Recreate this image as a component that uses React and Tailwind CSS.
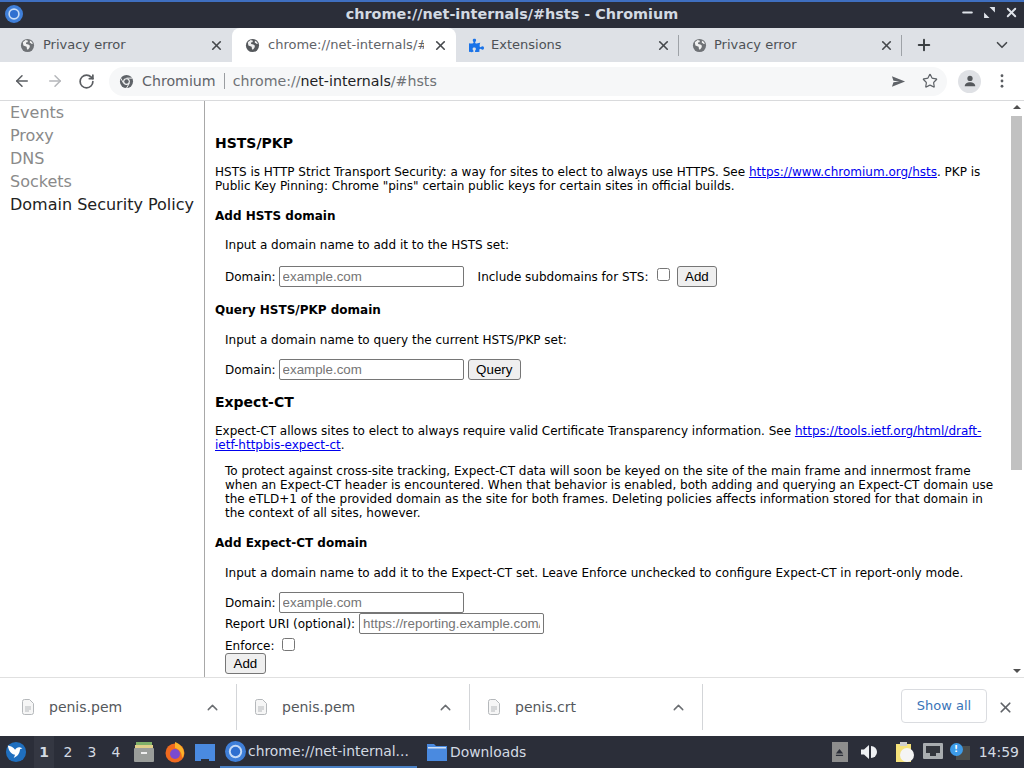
import React from "react";
import { ArrowLeft, ArrowRight, RotateCw, Star, X, Plus, ChevronDown, ChevronUp, Minus } from "lucide-react";
import { FaPuzzlePiece } from "react-icons/fa";

const Globe = ({ className }) => (
  <svg viewBox="0 0 16 16" className={className}>
    <circle cx="8" cy="8" r="7" fill="currentColor" />
    <path d="M3 4.500l3-2.300 2.500.6-.6 1.700-1.600.4.3 1.600 2.400.3 1.600 1.400-.5 2.200-1.700 2-1-.6-.3-2.400L3.600 8z" fill="#fff" opacity="0.9" />
    <path d="M10.500 2.700l2.300 1.600.9 2.200-1.700-.5-1.500-1.500z" fill="#fff" opacity="0.9" />
  </svg>
);

const ChromiumIcon = ({ size = 24 }) => (
  <svg viewBox="0 0 24 24" width={size} height={size} className="shrink-0">
    <circle cx="12" cy="12" r="12" fill="#3f7fd9" />
    <circle cx="12" cy="12" r="7.600" fill="#c7dbf6" />
    <circle cx="12" cy="12" r="5.400" fill="#2f6fd0" />
  </svg>
);

const Tab = ({ title, active, icon, divider, first }) => (
  <div className={`relative flex items-center h-[34px] shrink-0 pr-[8px] ${active ? "w-[224px] bg-white rounded-t-lg" : "w-[223px]"} ${first ? "pl-[10px]" : "pl-[12px]"}`}>
    <span className="w-[17px] flex justify-center shrink-0">{icon}</span>
    <span className={`w-[156px] overflow-hidden whitespace-nowrap text-[13px] ${first || active ? "ml-[7px]" : "ml-[6px]"} ${active ? "text-[#5f6368]" : "text-[#4d5156]"}`}>{title}</span>
    <X size={15} strokeWidth={2.6} className="ml-auto text-[#45484c] shrink-0" />
    {divider && <span className="absolute right-0 top-[7px] h-[21px] w-px bg-[#9ea2a7]" />}
  </div>
);

const Download = ({ name, width, inset }) => (
  <div className={`flex items-center h-[46px] border-r border-[#d3d5d8] pr-[15px] shrink-0 ${width} ${inset}`}>
    <svg viewBox="0 0 14 16" className="w-[14px] h-[16px] shrink-0 text-[#b5b8bb]" fill="none" stroke="currentColor" strokeWidth="1">
      <path d="M1.500 2.500a2 2 0 0 1 2-2h5l4 4v9a2 2 0 0 1-2 2h-7a2 2 0 0 1-2-2z" fill="#f6f6f6" />
      <path d="M4 8h6M4 10h6M4 12h4" />
    </svg>
    <span className="ml-[14px] text-[14px] text-[#55585c]">{name}</span>
    <ChevronUp size={17} strokeWidth={2} className="ml-auto text-[#6a6d71]" />
  </div>
);

const Field = ({ placeholder = "example.com", width = "w-[185px]" }) => (
  <input
    readOnly
    placeholder={placeholder}
    className={`${width} h-[21px] border border-[#767676] rounded-[2px] px-[3px] text-[13.33px] placeholder:text-[#757575] bg-white outline-none shrink-0`}
    style={{ fontFamily: "'Liberation Sans', sans-serif" }}
  />
);

const Btn = ({ children }) => (
  <button
    className="h-[21px] px-[7.5px] border border-[#767676] rounded-[3px] bg-[#efefef] text-[13.33px] text-black leading-none shrink-0"
    style={{ fontFamily: "'Liberation Sans', sans-serif" }}
  >
    {children}
  </button>
);

const Check = () => (
  <span className="inline-block w-[13px] h-[13px] border border-[#767676] rounded-[2.5px] bg-white shrink-0" />
);

const SectionTitle = ({ children, className }) => (
  <h3 className={`text-[12px] font-bold leading-[15px] text-black ${className}`}>{children}</h3>
);

const BigTitle = ({ children, className }) => (
  <h2 className={`text-[14px] font-bold leading-[17px] text-black ${className}`}>{children}</h2>
);

export default function App() {
  return (
    <div className="h-screen w-full flex flex-col overflow-hidden bg-white" style={{ fontFamily: "'DejaVu Sans', sans-serif" }}>
      {/* window title */}
      <div className="relative h-[28px] shrink-0 bg-[#2b2e39] border-t-2 border-[#3f6fc0] flex items-center justify-center">
        <span className="absolute left-[5px] top-[3px]"><ChromiumIcon size={18} /></span>
        <span className="text-[14.4px] font-bold text-[#d3dae3]">chrome://net-internals/#hsts - Chromium</span>
        <div className="absolute right-[5px] top-[3px] flex items-center gap-[8px] text-[#dfe3ea]">
          <Minus size={15} strokeWidth={3} />
          <svg viewBox="0 0 12 12" className="w-[13px] h-[13px]" fill="currentColor"><path d="M6 1h5v5zM6 11H1V6z" /></svg>
          <X size={15} strokeWidth={3} />
        </div>
      </div>

      {/* tab strip */}
      <div className="h-[34px] shrink-0 bg-[#dee1e6] flex items-center">
        <div className="w-[9px] shrink-0" />
        <Tab first title="Privacy error" icon={<Globe className="w-[15px] h-[15px] text-[#6f7276]" />} />
        <Tab title="chrome://net-internals/#hsts" active icon={<Globe className="w-[15px] h-[15px] text-[#55585c]" />} />
        <Tab title="Extensions" icon={<FaPuzzlePiece size={15} className="text-[#1a73e8]" />} divider />
        <Tab title="Privacy error" icon={<Globe className="w-[15px] h-[15px] text-[#6f7276]" />} divider />
        <Plus size={18} strokeWidth={2.6} className="ml-[13px] text-[#3c4043] shrink-0" />
        <ChevronDown size={18} strokeWidth={2.2} className="ml-[60px] text-[#45484c] shrink-0" />
      </div>

      {/* toolbar */}
      <div className="h-[39px] shrink-0 flex items-center border-b border-[#d9dadc] bg-white">
        <ArrowLeft size={18} strokeWidth={2} className="ml-[13px] text-[#5a5d61] shrink-0" />
        <ArrowRight size={18} strokeWidth={2} className="ml-[15px] text-[#b5b7ba] shrink-0" />
        <RotateCw size={17} strokeWidth={2.4} className="ml-[14px] text-[#5a5d61] shrink-0" />
        <div className="ml-[14px] w-[838px] h-[29px] rounded-full bg-[#f6f7f8] flex items-center pl-[10px] pr-[9px] shrink-0">
          <svg viewBox="0 0 16 16" className="w-[15px] h-[15px] shrink-0">
            <circle cx="8" cy="8" r="7" fill="#5f6368" />
            <path d="M8 4.400h6.300M5 10L1.800 4.400M11 10l-3.200 5.400" stroke="#f6f7f8" strokeWidth="1" />
            <circle cx="8" cy="8" r="3.600" fill="#f6f7f8" />
            <circle cx="8" cy="8" r="2.400" fill="#5f6368" />
          </svg>
          <span className="ml-[8px] mt-[1px] text-[14.2px] text-[#5f6368]">Chromium</span>
          <span className="mx-[8px] w-px h-[16px] bg-[#9a9da1]" />
          <span className="mt-[1px] text-[14.2px] text-[#6f7276]">chrome://<span className="text-[#202124]">net-internals</span>/#hsts</span>
          <svg viewBox="0 0 16 16" className="ml-auto w-[15px] h-[15px] text-[#5f6368] shrink-0" fill="currentColor"><path d="M1 2.500L15 8 1 13.500l1.600-4.600L9 8l-6.400-.9z" /></svg>
          <Star size={16} strokeWidth={1.8} className="ml-[16px] text-[#5f6368] shrink-0" />
        </div>
        <span className="ml-[11px] w-[23px] h-[23px] rounded-full bg-[#dfe1e5] flex items-center justify-center shrink-0">
          <svg viewBox="0 0 16 16" className="w-[14px] h-[14px] text-[#55585c]" fill="currentColor"><circle cx="8" cy="5" r="3" /><path d="M2 14c0-3 3-4.600 6-4.600s6 1.600 6 4.600z" /></svg>
        </span>
        <svg viewBox="0 0 4 16" className="ml-[19px] w-[4px] h-[14px] text-[#5a5d61] shrink-0" fill="currentColor"><circle cx="2" cy="2" r="1.600" /><circle cx="2" cy="8" r="1.600" /><circle cx="2" cy="14" r="1.600" /></svg>
      </div>

      {/* page */}
      <div className="flex-1 min-h-0 flex overflow-hidden">
        <nav className="w-[205px] shrink-0 border-r border-[#a8a8a8] pl-[10px] text-[16px] leading-[23px] text-[#8a8a8a]">
          <div>Events</div>
          <div>Proxy</div>
          <div>DNS</div>
          <div>Sockets</div>
          <div className="text-[#222]">Domain Security Policy</div>
        </nav>

        <main className="flex-1 min-w-0 pl-[10px] pr-[14px] text-[12px] leading-[14px] text-black overflow-hidden">
          <BigTitle className="mt-[34px]">HSTS/PKP</BigTitle>
          <p className="mt-[13px]">
            HSTS is HTTP Strict Transport Security: a way for sites to elect to always use HTTPS. See{" "}
            <a className="text-[#0000ee] underline">https://www.chromium.org/hsts</a>. PKP is Public Key Pinning: Chrome "pins" certain public keys for certain sites in official builds.
          </p>
          <SectionTitle className="mt-[16px]">Add HSTS domain</SectionTitle>
          <p className="mt-[14px] ml-[10px]">Input a domain name to add it to the HSTS set:</p>
          <div className="mt-[14px] ml-[10px] flex items-center">
            <span>Domain:</span>
            <span className="ml-[3px]"><Field /></span>
            <span className="ml-[14px]">Include subdomains for STS:</span>
            <span className="ml-[8px] -mt-[4px] flex"><Check /></span>
            <span className="ml-[7px]"><Btn>Add</Btn></span>
          </div>
          <SectionTitle className="mt-[16px]">Query HSTS/PKP domain</SectionTitle>
          <p className="mt-[15px] ml-[10px]">Input a domain name to query the current HSTS/PKP set:</p>
          <div className="mt-[12px] ml-[10px] flex items-center">
            <span>Domain:</span>
            <span className="ml-[3px]"><Field /></span>
            <span className="ml-[4px]"><Btn>Query</Btn></span>
          </div>
          <BigTitle className="mt-[14px]">Expect-CT</BigTitle>
          <p className="mt-[13px]">
            Expect-CT allows sites to elect to always require valid Certificate Transparency information. See{" "}
            <a className="text-[#0000ee] underline">https://tools.ietf.org/html/draft-ietf-httpbis-expect-ct</a>.
          </p>
          <p className="mt-[12px] ml-[10px]">
            To protect against cross-site tracking, Expect-CT data will soon be keyed on the site of the main frame and innermost frame when an Expect-CT header is encountered. When that behavior is enabled, both adding and querying an Expect-CT domain use the eTLD+1 of the provided domain as the site for both frames. Deleting policies affects information stored for that domain in the context of all sites, however.
          </p>
          <SectionTitle className="mt-[16px]">Add Expect-CT domain</SectionTitle>
          <p className="mt-[15px] ml-[10px]">Input a domain name to add it to the Expect-CT set. Leave Enforce unchecked to configure Expect-CT in report-only mode.</p>
          <div className="mt-[12px] ml-[10px] flex items-center">
            <span>Domain:</span>
            <span className="ml-[3px]"><Field /></span>
          </div>
          <div className="ml-[10px] flex items-center">
            <span>Report URI (optional):</span>
            <span className="ml-[4px]"><Field placeholder="https://reporting.example.com/" /></span>
          </div>
          <div className="mt-[4px] ml-[10px] flex items-center h-[16px]">
            <span>Enforce:</span>
            <span className="ml-[8px] -mt-[3px] flex"><Check /></span>
          </div>
          <div className="-mt-[1px] ml-[10px]"><Btn>Add</Btn></div>
        </main>

        {/* scrollbar */}
        <div className="w-[15px] shrink-0 flex flex-col items-center pt-[4px] pb-[4px]">
          <span className="w-0 h-0 border-x-[4px] border-x-transparent border-b-[4px] border-b-[#505050]" />
          <span className="mt-[7px] w-[11px] h-[354px] bg-[#c1c1c1]" />
          <span className="mt-auto w-0 h-0 border-x-[4px] border-x-transparent border-t-[4px] border-t-[#505050]" />
        </div>
      </div>

      {/* download shelf */}
      <div className="h-[59px] shrink-0 flex items-center border-t border-[#e0e0e0] bg-white">
        <Download name="penis.pem" width="w-[237px]" inset="pl-[21px]" />
        <Download name="penis.pem" width="w-[233px]" inset="pl-[17px]" />
        <Download name="penis.crt" width="w-[233px]" inset="pl-[17px]" />
        <button className="ml-auto w-[86px] h-[34px] border border-[#dadce0] rounded-[4px] text-[13px] text-[#3a74b8] -mt-[2px] shrink-0">Show all</button>
        <X size={17} strokeWidth={2.4} className="ml-[10px] mr-[10px] text-[#5f6368] shrink-0" />
      </div>

      {/* desktop panel */}
      <div className="h-[32px] shrink-0 bg-[#2b2e39] flex items-center text-[#d3dae3] text-[13.9px]">
        <svg viewBox="0 0 24 24" className="ml-[5px] w-[22px] h-[22px] shrink-0">
          <circle cx="12" cy="12" r="11" fill="#1f6fbf" />
          <path d="M3 5c3 .5 6 2 8 4.500C12 7.500 14 6.500 16 6.800l3 1.200-2.600 1c-.3 4.500-3 8-6.900 9.500l1.500-3.500c-3.500-.5-7-3.500-8-10z" fill="#fff" />
        </svg>
        <span className="ml-[7px] mr-[2px] w-[20px] h-[32px] bg-[#343742] flex items-center justify-center font-bold shrink-0">1</span>
        <span className="w-[24px] text-center shrink-0">2</span>
        <span className="w-[24px] text-center shrink-0">3</span>
        <span className="w-[24px] text-center shrink-0">4</span>
        <svg viewBox="0 0 22 22" className="ml-[5px] w-[22px] h-[22px] shrink-0">
          <rect x="3" y="1" width="16" height="3" fill="#7fb069" />
          <rect x="2" y="4" width="18" height="3" fill="#e0cf8a" />
          <rect x="1" y="7" width="20" height="14" rx="1" fill="#9a9d9a" />
          <rect x="8" y="11" width="6" height="2" fill="#eee" />
        </svg>
        <svg viewBox="0 0 22 22" className="ml-[9px] w-[22px] h-[22px] shrink-0">
          <circle cx="11" cy="12" r="9.500" fill="#ef6a1f" />
          <circle cx="11" cy="13" r="5" fill="#7a4bd0" />
          <path d="M11 1c5 2 9 6 9 11 0 2-1 4-2 5 0-6-3-9-7-10z" fill="#fbb32a" />
        </svg>
        <svg viewBox="0 0 22 22" className="ml-[8px] w-[22px] h-[22px] shrink-0">
          <path d="M1 3h20v17h-6v-2H7v2H1z" fill="#4a8ae0" />
        </svg>
        <div className="ml-[4px] w-[197px] h-[32px] flex items-center border-b-2 border-[#4a80c4] shrink-0">
          <span className="ml-[5px]"><ChromiumIcon size={21} /></span>
          <span className="ml-[2px] whitespace-nowrap">chrome://net-internal...</span>
        </div>
        <svg viewBox="0 0 20 20" className="ml-[10px] w-[20px] h-[20px] shrink-0">
          <path d="M0 2h7l2 2h11v15H0z" fill="#4a8ae0" />
          <rect x="1" y="5" width="18" height="1.500" fill="#cfe0f6" />
        </svg>
        <span className="ml-[3px]">Downloads</span>
        <span className="ml-auto w-[16px] h-[20px] bg-[#8d8d8d] flex items-center justify-center shrink-0">
          <svg viewBox="0 0 10 10" className="w-[9px] h-[9px] text-[#2b2e39]" fill="currentColor"><path d="M5 1l4 5H1zM1 7.500h8V9H1z" /></svg>
        </span>
        <svg viewBox="0 0 18 18" className="ml-[12px] w-[18px] h-[18px] shrink-0 text-[#eef0f3]" fill="currentColor">
          <path d="M1 6.500h3L9 2v14l-5-4.500H1z" />
          <path d="M11 3a6 6 0 0 1 0 12z" />
        </svg>
        <svg viewBox="0 0 20 22" className="ml-[17px] w-[20px] h-[22px] shrink-0">
          <rect x="1" y="3" width="15" height="18" fill="#f5e27a" />
          <circle cx="12" cy="14" r="7" fill="#f4f4f4" />
          <rect x="5" y="1" width="7" height="4" fill="#cfcfcf" />
        </svg>
        <svg viewBox="0 0 20 18" className="ml-[8px] w-[20px] h-[18px] shrink-0">
          <rect x="0" y="0" width="20" height="16" rx="1" fill="#a9adb0" />
          <rect x="3" y="3" width="14" height="7" fill="#33363d" />
          <path d="M7 10h6v3H7z" fill="#33363d" />
        </svg>
        <span className="relative ml-[7px] w-[20px] h-[18px] shrink-0">
          <span className="absolute right-0 top-[3px] w-[14px] h-[14px] bg-[#4a4d4c]" />
          <span className="absolute left-0 top-0 w-[13px] h-[13px] rounded-full bg-[#3d9be8] text-white text-[9px] leading-[13px] text-center font-bold">!</span>
        </span>
        <span className="ml-[9px] mr-[5px] text-[14px] shrink-0">14:59</span>
      </div>
    </div>
  );
}
